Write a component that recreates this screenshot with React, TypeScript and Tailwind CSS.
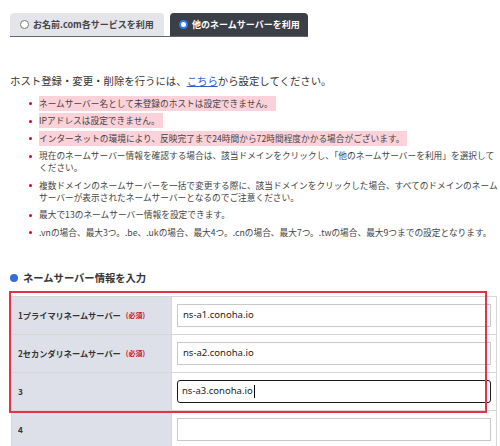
import React from 'react';

const jp = { fontFamily: '"Noto Sans CJK JP", "Noto Sans", sans-serif' };

interface NsRow {
  label: string;
  required?: boolean;
  value: string;
  focused?: boolean;
}

const rows: NsRow[] = [
  { label: '1プライマリネームサーバー', required: true, value: 'ns-a1.conoha.io' },
  { label: '2セカンダリネームサーバー', required: true, value: 'ns-a2.conoha.io' },
  { label: '3', value: 'ns-a3.conoha.io', focused: true },
  { label: '4', value: '' },
];

const Bullet: React.FC<{ children: React.ReactNode }> = ({ children }) => (
  <li className="flex items-start mt-[5.5px] first:mt-0">
    <span className="mt-[4.5px] mr-[7px] h-[3px] w-[3px] shrink-0 rounded-full bg-[#d0021b]" />
    <span className="whitespace-nowrap">{children}</span>
  </li>
);

const Warn: React.FC<{ children: React.ReactNode }> = ({ children }) => (
  <span className="bg-[#fbd2da] py-[1px] pr-[3px]">{children}</span>
);

export default function App() {
  return (
    <div className="w-[500px] h-[446px] overflow-hidden bg-white text-[#333]" style={jp}>
      {/* Tabs */}
      <div className="pt-[13px] pl-[10px]">
        <div className="flex w-fit items-end gap-[6px] border-b border-[#666]">
          <div className="flex h-[23px] w-[154px] items-center gap-[4px] rounded-t-[4px] bg-[#e4e4eb] pl-[10px] text-[9px] font-bold text-[#444]">
            <span className="h-[9px] w-[9px] rounded-full border border-[#777] bg-white" />
            <span>お名前.com各サービスを利用</span>
          </div>
          <div className="flex h-[23px] w-[138px] items-center gap-[4px] rounded-t-[4px] bg-[#3b4048] pl-[9px] text-[9px] font-bold text-white">
            <span className="flex h-[9px] w-[9px] items-center justify-center rounded-full border-[2px] border-[#2f7bf0] bg-white" />
            <span>他のネームサーバーを利用</span>
          </div>
        </div>
      </div>

      {/* Intro */}
      <p className="mt-[37px] pl-[10px] text-[10.4px] leading-[14px] text-[#333]">
        ホスト登録・変更・削除を行うには、<span className="text-[#2a62c9] underline">こちら</span>から設定してください。
      </p>

      <ul className="mt-[9.5px] pl-[29px] text-[8.7px] leading-[12px] text-[#444]">
        <Bullet><Warn>ネームサーバー名として未登録のホストは設定できません。</Warn></Bullet>
        <Bullet><Warn>IPアドレスは設定できません。</Warn></Bullet>
        <Bullet><Warn>インターネットの環境により、反映完了まで24時間から72時間程度かかる場合がございます。</Warn></Bullet>
        <Bullet>
          現在のネームサーバー情報を確認する場合は、該当ドメインをクリックし、「他のネームサーバーを利用」を選択して
          <br />
          ください。
        </Bullet>
        <Bullet>
          複数ドメインのネームサーバーを一括で変更する際に、該当ドメインをクリックした場合、すべてのドメインのネーム
          <br />
          サーバーが表示されたネームサーバーとなるのでご注意ください。
        </Bullet>
        <Bullet>最大で13のネームサーバー情報を設定できます。</Bullet>
        <Bullet>.vnの場合、最大3つ。.be、.ukの場合、最大4つ。.cnの場合、最大7つ。.twの場合、最大9つまでの設定となります。</Bullet>
      </ul>

      {/* Section header */}
      <div className="mt-[32px] flex items-center pl-[10px] text-[10.3px] font-bold leading-[14px] text-[#333]">
        <span className="mr-[5px] h-[8px] w-[8px] rounded-full bg-[#2f6fd8]" />
        ネームサーバー情報を入力
      </div>

      {/* Table */}
      <div className="relative ml-[11px] mt-[11px] w-[486px]">
        <div className="border-t border-l border-r border-[#d6d6d6]">
          {rows.map((r) => (
            <div key={r.label} className="flex h-[38px] border-b border-[#d6d6d6]">
              <div className="flex w-[160px] shrink-0 items-center border-r border-[#d6d6d6] bg-[#dde0e8] pl-[6px] text-[8.2px] font-bold text-[#333]">
                <span>{r.label}</span>
                {r.required && <span className="ml-[5px] text-[7px] font-bold text-[#c8102e]">(必須)</span>}
              </div>
              <div className="flex flex-1 items-center px-[5px]">
                <div
                  className={
                    r.focused
                      ? 'flex h-[23px] w-full items-center rounded-[3px] border-[1.5px] border-[#1b1b1b] pl-[4px] text-[9.5px] text-[#222]'
                      : 'flex h-[23px] w-full items-center border border-[#c9c9c9] pl-[5px] text-[9.5px] text-[#222]'
                  }
                  style={{ fontFamily: '"Noto Sans", sans-serif' }}
                >
                  {r.value}
                  {r.focused && <span className="ml-[1px] h-[13px] w-[1px] bg-black" />}
                </div>
              </div>
            </div>
          ))}
        </div>
        {/* red annotation box */}
        <div className="pointer-events-none absolute left-[-2px] top-[-5px] h-[122px] w-[478px] border-[2px] border-[#e6314b]" />
      </div>
    </div>
  );
}
